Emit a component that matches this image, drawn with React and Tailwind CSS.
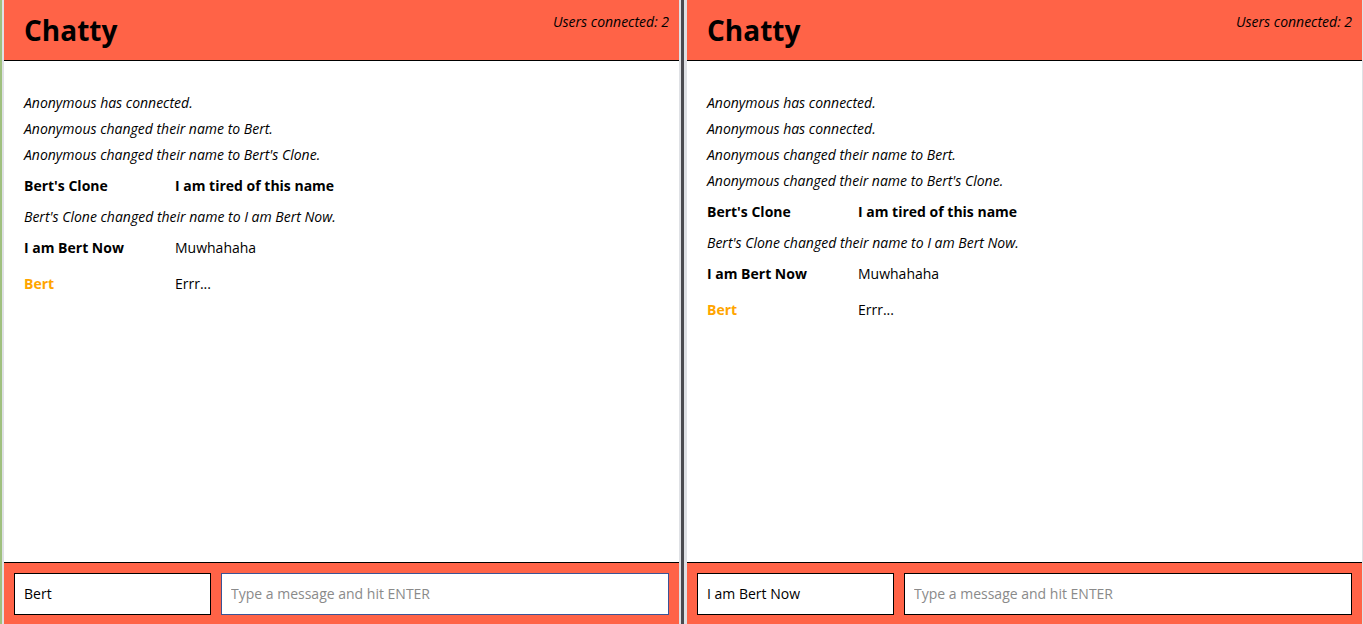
import React from 'react';

const leftMessages = [
  { type: 'system', content: 'Anonymous has connected.' },
  { type: 'system', content: 'Anonymous changed their name to Bert.' },
  { type: 'system', content: "Anonymous changed their name to Bert's Clone." },
  { type: 'user', username: "Bert's Clone", content: 'I am tired of this name', bold: true },
  { type: 'system', content: "Bert's Clone changed their name to I am Bert Now." },
  { type: 'user', username: 'I am Bert Now', content: 'Muwhahaha' },
  { type: 'user', username: 'Bert', content: 'Errr...', color: 'orange' },
];

const rightMessages = [
  { type: 'system', content: 'Anonymous has connected.' },
  { type: 'system', content: 'Anonymous has connected.' },
  { type: 'system', content: 'Anonymous changed their name to Bert.' },
  { type: 'system', content: "Anonymous changed their name to Bert's Clone." },
  { type: 'user', username: "Bert's Clone", content: 'I am tired of this name', bold: true },
  { type: 'system', content: "Bert's Clone changed their name to I am Bert Now." },
  { type: 'user', username: 'I am Bert Now', content: 'Muwhahaha' },
  { type: 'user', username: 'Bert', content: 'Errr...', color: 'orange' },
];

function Message({ msg }) {
  if (msg.type === 'system') {
    return <div className="h-[26px] flex items-center italic text-[14px]">{msg.content}</div>;
  }
  return (
    <div className="h-[36px] flex items-center text-[14px]">
      <span
        className={
          'w-[151px] shrink-0 font-bold ' + (msg.color === 'orange' ? 'text-[#ffa500]' : 'text-black')
        }
      >
        {msg.username}
      </span>
      <span className={msg.bold ? 'font-bold' : ''}>{msg.content}</span>
    </div>
  );
}

function ChatWindow({ messages, user, focused }) {
  return (
    <div className="flex-1 h-full flex flex-col bg-white min-w-0">
      <nav className="h-[61px] shrink-0 bg-[#ff6347] border-b border-black flex justify-between">
        <h1 className="pl-[20px] text-[28px] font-bold leading-none self-center pb-[1px]">Chatty</h1>
        <span className="italic text-[14px] mt-[11px] mr-[10px]">Users connected: 2</span>
      </nav>
      <main className="flex-1 pt-[28px] px-[20px]">
        {messages.map((m, i) => (
          <Message key={i} msg={m} />
        ))}
      </main>
      <footer className="h-[62px] shrink-0 bg-[#ff6347] border-t border-black flex gap-[10px] px-[10px] pt-[10px]">
        <input
          className="w-[197px] h-[42px] border-[1.5px] border-black bg-white px-[9px] pb-[2px] text-[14px] outline-none"
          defaultValue={user}
        />
        <input
          className={
            'flex-1 h-[42px] border-[1.5px] bg-white px-[9px] pb-[2px] text-[14px] outline-none placeholder:text-[#8a8a8a] ' +
            (focused ? 'border-[#3b5496]' : 'border-black')
          }
          placeholder="Type a message and hit ENTER"
        />
      </footer>
    </div>
  );
}

export default function App() {
  return (
    <div
      className="w-[1363px] h-[624px] flex text-black overflow-hidden"
      style={{ fontFamily: '"Open Sans", sans-serif' }}
    >
      <div className="w-[2px] bg-[#9fc07e]" />
      <div className="w-[2px] bg-[#dfe1e5]" />
      <ChatWindow messages={leftMessages} user="Bert" focused />
      <div className="w-[2px] bg-[#dfe1e5]" />
      <div className="w-[3px] bg-[#4b4b50]" />
      <div className="w-[3px] bg-[#dfe1e5]" />
      <ChatWindow messages={rightMessages} user="I am Bert Now" />
      <div className="w-[1px] bg-[#dfe1e5]" />
    </div>
  );
}
